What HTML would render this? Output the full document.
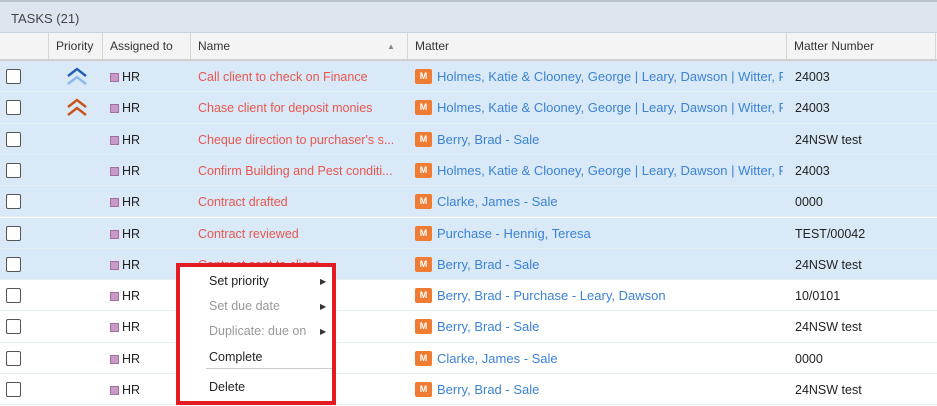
<!DOCTYPE html><html><head><style>
*{margin:0;padding:0;box-sizing:border-box}
body{width:937px;height:406px;overflow:hidden;background:#fff;font-family:"Liberation Sans",sans-serif;font-size:12.5px;color:#222;position:relative}
.top{position:absolute;left:0;top:0;width:937px;height:33px;background:#dde6ee;border-top:2px solid #b9c3cc;border-bottom:1px solid #c9d2da}
.top span{position:absolute;left:11px;top:9px;font-size:13px;color:#444}
.hdr{position:absolute;left:0;top:33px;width:937px;height:28px;background:#f4f4f4;border-bottom:2px solid #d0d0d0}
.hc{position:absolute;top:0;height:26px;line-height:27px;font-size:12px;color:#333;border-left:1px solid #d6d6d6;padding-left:7px}
.row{position:absolute;left:0;width:937px;height:31.3px;border-bottom:1px solid #e6eef5}
.sel{background:#d9e9f8}
.cb{position:absolute;left:6px;top:8px;width:15px;height:15px;border:1.3px solid #555;border-radius:2px;background:#fff}
.hr{position:absolute;left:110px;top:9px;font-size:12.5px;color:#222}
.hr i{display:inline-block;width:9px;height:9px;background:#c99ac8;border:1px solid #a070a0;margin-right:3px;vertical-align:-1px}
.nm{position:absolute;left:198px;top:9px;color:#e8574f;white-space:nowrap;width:205px;overflow:hidden}
.mt{position:absolute;left:415px;top:0;height:31px;display:flex;align-items:center;color:#3b83d6;white-space:nowrap;width:368px;overflow:hidden;font-size:13px}
.mt b{flex:none;display:inline-block;width:17px;height:15px;background:#f07b32;border-radius:2px;color:#fff;font-size:9px;text-align:center;line-height:15px;margin-right:5px}
.mn{position:absolute;left:795px;top:9px;color:#222}
.menu{position:absolute;left:176px;top:263px;width:160px;height:142px;border:4px solid #e31b23;background:#fff}
.mi{position:absolute;left:29px;font-size:12.5px;color:#222}
.dis{color:#999}
.ar{position:absolute;left:140px;font-size:8px;color:#333}
</style></head><body>
<div class="top"><span>TASKS (21)</span></div>
<div class="hdr">
<div class="hc" style="left:48px;width:54px;padding-left:7px">Priority</div>
<div class="hc" style="left:102px;width:88px">Assigned to</div>
<div class="hc" style="left:190px;width:217px">Name<span style="position:absolute;left:196px;font-size:8px;color:#888">▲</span></div>
<div class="hc" style="left:407px;width:379px">Matter</div>
<div class="hc" style="left:786px;width:149px">Matter Number</div>
<div class="hc" style="left:935px;width:2px"></div>
</div>
<div class="row sel" style="top:61px"><div class="cb"></div>
<svg style="position:absolute;left:65px;top:6px" width="24" height="20"><path d="M3 9 L12 2 L21 9" stroke="#1f5fb8" stroke-width="2.4" fill="none"/><path d="M3 17 L12 10 L21 17" stroke="#8ab8ea" stroke-width="2.4" fill="none"/></svg>
<div class="hr"><i></i>HR</div><div class="nm">Call client to check on Finance</div><div class="mt"><b>M</b>Holmes, Katie &amp; Clooney, George | Leary, Dawson | Witter, P.</div><div class="mn">24003</div></div>
<div class="row sel" style="top:92.3px"><div class="cb"></div>
<svg style="position:absolute;left:65px;top:6px" width="24" height="20"><path d="M3 9 L12 2 L21 9" stroke="#c9531a" stroke-width="2.4" fill="none"/><path d="M3 17 L12 10 L21 17" stroke="#c9531a" stroke-width="2.4" fill="none"/></svg>
<div class="hr"><i></i>HR</div><div class="nm">Chase client for deposit monies</div><div class="mt"><b>M</b>Holmes, Katie &amp; Clooney, George | Leary, Dawson | Witter, P.</div><div class="mn">24003</div></div>
<div class="row sel" style="top:123.6px"><div class="cb"></div><div class="hr"><i></i>HR</div><div class="nm">Cheque direction to purchaser's s...</div><div class="mt"><b>M</b>Berry, Brad - Sale</div><div class="mn">24NSW test</div></div>
<div class="row sel" style="top:154.9px"><div class="cb"></div><div class="hr"><i></i>HR</div><div class="nm">Confirm Building and Pest conditi...</div><div class="mt"><b>M</b>Holmes, Katie &amp; Clooney, George | Leary, Dawson | Witter, P.</div><div class="mn">24003</div></div>
<div class="row sel" style="top:186.2px"><div class="cb"></div><div class="hr"><i></i>HR</div><div class="nm">Contract drafted</div><div class="mt"><b>M</b>Clarke, James - Sale</div><div class="mn">0000</div></div>
<div class="row sel" style="top:217.5px"><div class="cb"></div><div class="hr"><i></i>HR</div><div class="nm">Contract reviewed</div><div class="mt"><b>M</b>Purchase - Hennig, Teresa</div><div class="mn">TEST/00042</div></div>
<div class="row sel" style="top:248.8px"><div class="cb"></div><div class="hr"><i></i>HR</div><div class="nm">Contract sent to client</div><div class="mt"><b>M</b>Berry, Brad - Sale</div><div class="mn">24NSW test</div></div>
<div class="row" style="top:280.1px"><div class="cb"></div><div class="hr"><i></i>HR</div><div class="nm"></div><div class="mt"><b>M</b>Berry, Brad - Purchase - Leary, Dawson</div><div class="mn">10/0101</div></div>
<div class="row" style="top:311.4px"><div class="cb"></div><div class="hr"><i></i>HR</div><div class="nm"></div><div class="mt"><b>M</b>Berry, Brad - Sale</div><div class="mn">24NSW test</div></div>
<div class="row" style="top:342.7px"><div class="cb"></div><div class="hr"><i></i>HR</div><div class="nm">Contract sent to client</div><div class="mt"><b>M</b>Clarke, James - Sale</div><div class="mn">0000</div></div>
<div class="row" style="top:374px"><div class="cb"></div><div class="hr"><i></i>HR</div><div class="nm">Deposit receipt to agent</div><div class="mt"><b>M</b>Berry, Brad - Sale</div><div class="mn">24NSW test</div></div>
<div class="menu">
<div class="mi" style="top:7px">Set priority</div><div class="ar" style="top:10px">▶</div>
<div class="mi dis" style="top:32px">Set due date</div><div class="ar" style="top:35px">▶</div>
<div class="mi dis" style="top:57px">Duplicate: due on</div><div class="ar" style="top:60px">▶</div>
<div class="mi" style="top:83px">Complete</div>
<div style="position:absolute;left:26px;top:101px;width:126px;height:1px;background:#ccc"></div>
<div class="mi" style="top:113px">Delete</div>
</div>
</body></html>
